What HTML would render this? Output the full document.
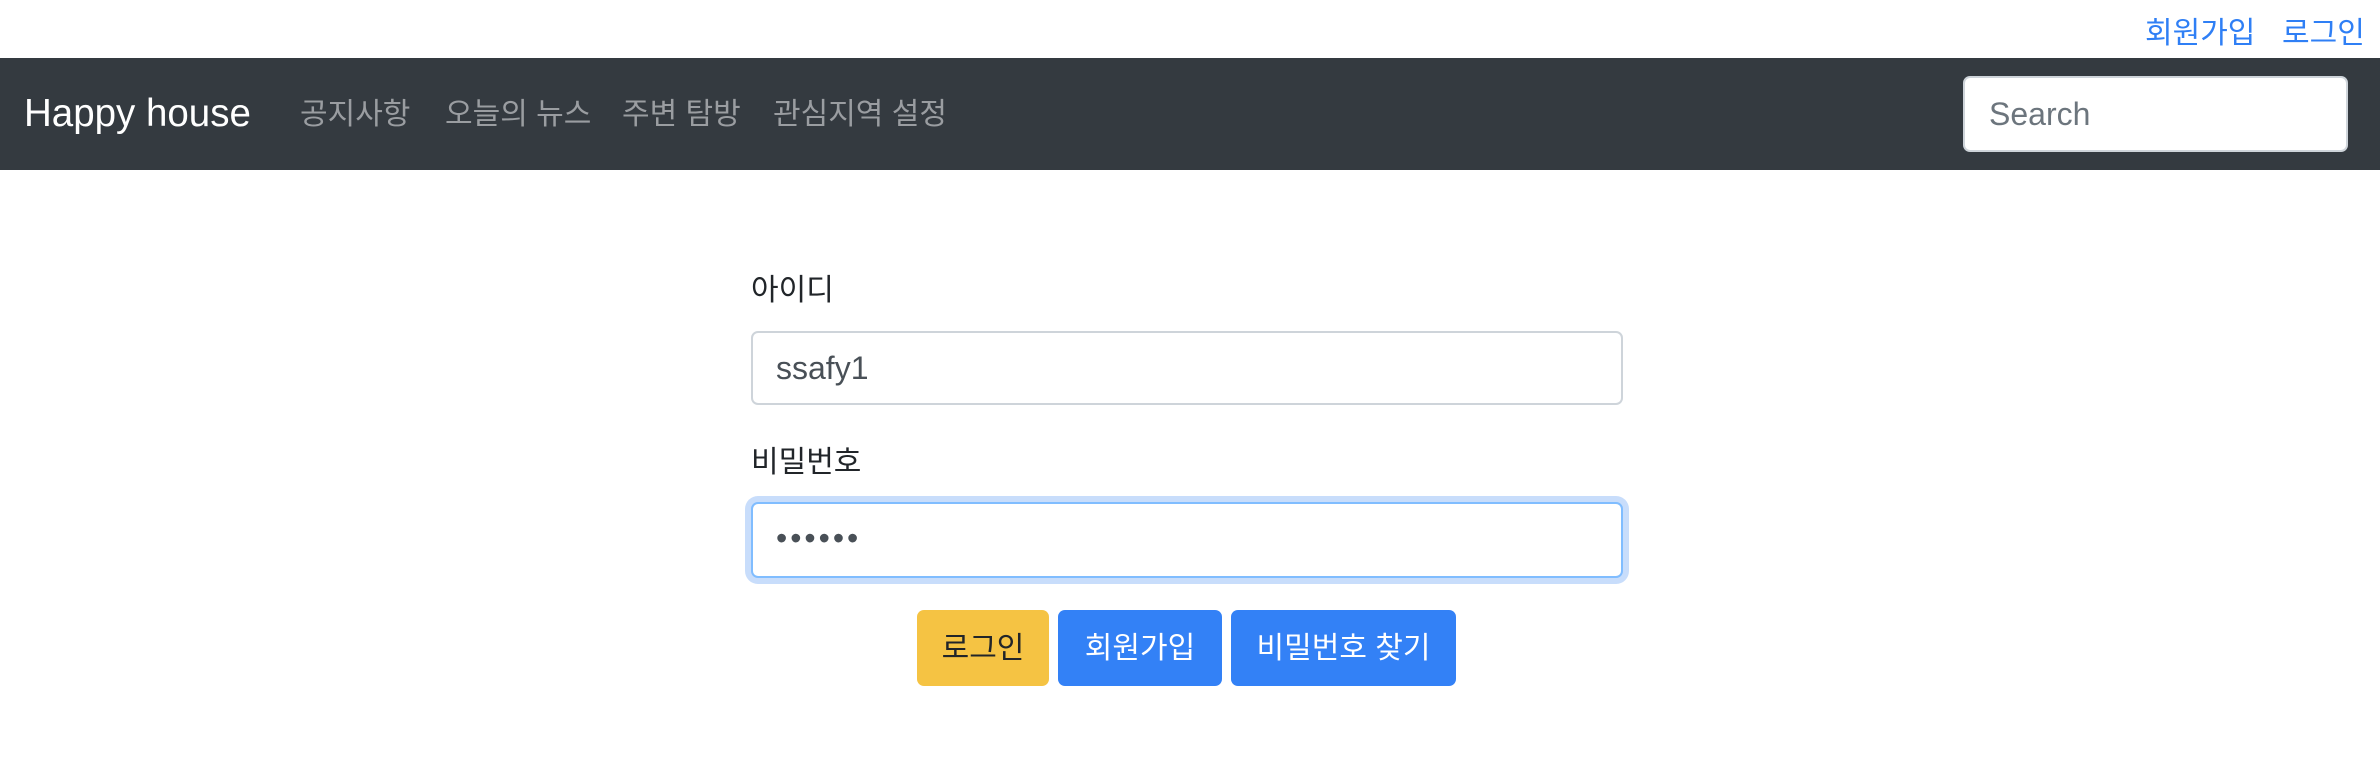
<!DOCTYPE html>
<html><head><meta charset="utf-8">
<style>
*{margin:0;padding:0;box-sizing:border-box}
body{width:2380px;height:758px;background:#fff;position:relative;overflow:hidden;font-family:"Liberation Sans","Noto Sans CJK KR",sans-serif}
.a{position:absolute;white-space:nowrap}
.k{font-size:30px;line-height:40px}
.nav{position:absolute;left:0;top:58px;width:2380px;height:112px;background:#343a40}
.inp{position:absolute;background:#fff;border:2px solid #ced4da;border-radius:7px}
.btn{position:absolute;top:610px;height:76px;border-radius:7px;color:#fff;font-size:30px;line-height:78px;text-align:center}
</style></head><body>
<div class="a k" style="left:2145px;top:14px;color:#2f7ff5">회원가입</div>
<div class="a k" style="left:2282px;top:14px;color:#2f7ff5">로그인</div>
<div class="nav"></div>
<div class="a" style="left:24px;top:92px;font-size:38.5px;line-height:44px;color:#fff">Happy house</div>
<div class="a k" style="left:300px;top:95px;color:#9a9da1">공지사항</div>
<div class="a k" style="left:445px;top:95px;color:#9a9da1">오늘의 뉴스</div>
<div class="a k" style="left:622px;top:95px;color:#9a9da1">주변 탐방</div>
<div class="a k" style="left:773px;top:95px;color:#9a9da1">관심지역 설정</div>
<div class="inp" style="left:1963px;top:76px;width:385px;height:76px"></div>
<div class="a" style="left:1989px;top:96px;font-size:32px;line-height:36px;color:#6c757d">Search</div>

<div class="a k" style="left:751px;top:271px;color:#212529">아이디</div>
<div class="inp" style="left:751px;top:331px;width:872px;height:74px"></div>
<div class="a" style="left:776px;top:350px;font-size:32px;line-height:36px;color:#495057">ssafy1</div>
<div class="a k" style="left:751px;top:443px;color:#212529">비밀번호</div>
<div class="inp" style="left:751px;top:502px;width:872px;height:76px;border-color:#80bdff;box-shadow:0 0 0 6px #c8ddfb"></div>
<div class="a" style="left:776px;top:518px;font-size:32px;line-height:40px;color:#495057;letter-spacing:3px">••••••</div>

<div class="btn" style="left:917px;width:132px;background:#f5c343;color:#212529">로그인</div>
<div class="btn" style="left:1058px;width:164px;background:#3381f6">회원가입</div>
<div class="btn" style="left:1231px;width:225px;background:#3381f6">비밀번호 찾기</div>
</body></html>
